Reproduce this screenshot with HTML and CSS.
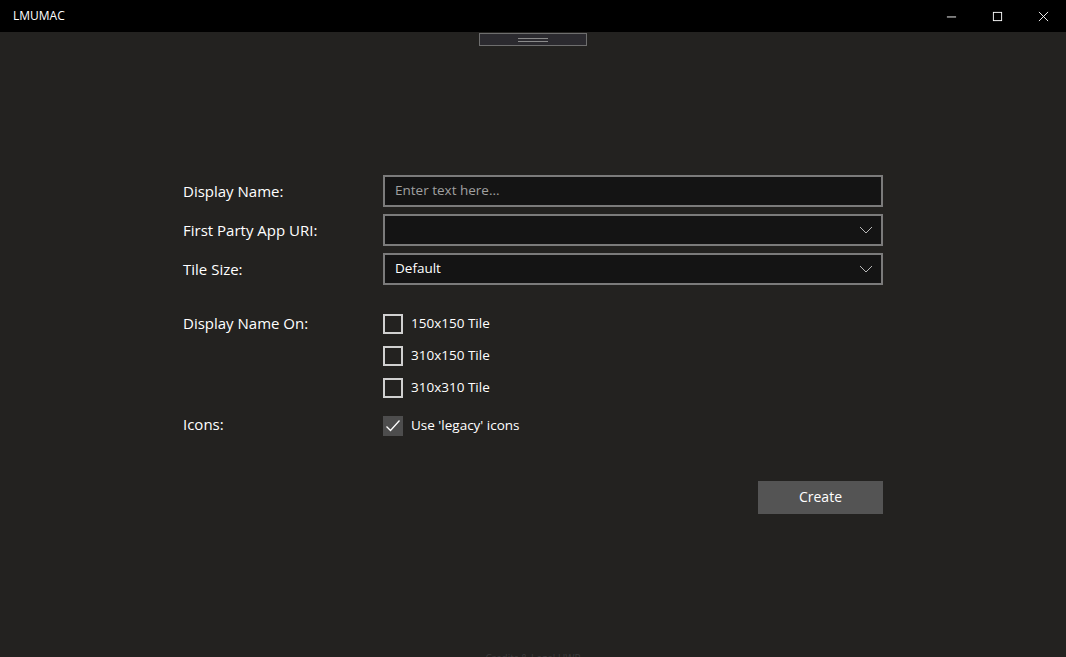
FILE: index.html
```html
<!DOCTYPE html>
<html>
<head>
<meta charset="utf-8">
<link rel="stylesheet" href="styles.css">
</head>
<body>
<div class="window">
  <header class="titlebar">
    <span class="title">LMUMAC</span>
    <div class="caption-buttons">
      <span class="cap-btn"><svg width="12" height="12" viewBox="0 0 12 12"><path d="M1 6.5H11" stroke="#fff" stroke-width="1"/></svg></span>
      <span class="cap-btn"><svg width="12" height="12" viewBox="0 0 12 12"><rect x="1.5" y="1.5" width="9" height="9" fill="none" stroke="#fff" stroke-width="1"/></svg></span>
      <span class="cap-btn"><svg width="12" height="12" viewBox="0 0 12 12"><path d="M1 1L11 11M11 1L1 11" stroke="#fff" stroke-width="1"/></svg></span>
    </div>
  </header>
  <main class="content">
    <div class="handle"><span class="grip"></span></div>
    <form class="form">
      <label class="label">Display Name:</label>
      <div class="field text-field"><span class="placeholder">Enter text here...</span></div>

      <label class="label row2">First Party App URI:</label>
      <div class="field combo row2"><span class="value"></span><svg class="chev" width="14" height="8" viewBox="0 0 14 8"><path d="M1 1L7 7L13 1" fill="none" stroke="#b8b8b8" stroke-width="1"/></svg></div>

      <label class="label row3">Tile Size:</label>
      <div class="field combo row3"><span class="value">Default</span><svg class="chev" width="14" height="8" viewBox="0 0 14 8"><path d="M1 1L7 7L13 1" fill="none" stroke="#b8b8b8" stroke-width="1"/></svg></div>

      <label class="label label-checks">Display Name On:</label>
      <div class="checks">
        <div class="check"><span class="box"></span><span class="check-text">150x150 Tile</span></div>
        <div class="check"><span class="box"></span><span class="check-text">310x150 Tile</span></div>
        <div class="check"><span class="box"></span><span class="check-text">310x310 Tile</span></div>
      </div>

      <label class="label label-icons">Icons:</label>
      <div class="checks icons-check">
        <div class="check"><span class="box checked"><svg width="20" height="20" viewBox="0 0 20 20"><path d="M3.5 10.5L7.5 14.5L16.5 4.5" fill="none" stroke="#fff" stroke-width="1.3"/></svg></span><span class="check-text">Use 'legacy' icons</span></div>
      </div>

      <div class="actions"><button type="button" class="btn">Create</button></div>
    </form>
    <div class="footer-note">Credits &amp; Legal UWP</div>
  </main>
</div>
</body>
</html>
```

FILE: styles.css
```css
* { box-sizing: border-box; }
html, body {
  margin: 0;
  padding: 0;
  background: #232220;
}
body {
  font-family: "Segoe UI", "Open Sans", "Noto Sans", sans-serif;
  color: #fff;
}
.window {
  width: 1066px;
  height: 657px;
  display: flex;
  flex-direction: column;
  overflow: hidden;
}
.titlebar {
  height: 32px;
  background: #000;
  display: flex;
  align-items: center;
  justify-content: space-between;
  flex-shrink: 0;
}
.title {
  font-size: 12px;
  padding-left: 13px;
  padding-bottom: 1px;
}
.caption-buttons {
  display: flex;
  height: 32px;
}
.cap-btn {
  width: 46px;
  height: 32px;
  display: flex;
  align-items: center;
  justify-content: center;
}
.cap-btn svg { width: 11px; height: 11px; }
.content {
  flex: 1;
  display: flex;
  flex-direction: column;
  align-items: center;
  background: #232220;
}
.handle {
  width: 108px;
  height: 13px;
  margin-top: 1px;
  border: 1px solid #6e6e6e;
  background: #2b2a2f;
  display: flex;
  align-items: center;
  justify-content: center;
}
.grip {
  width: 30px;
  height: 4px;
  border-top: 1px solid #8a8a8a;
  border-bottom: 1px solid #8a8a8a;
}
.form {
  margin-top: 129px;
  width: 700px;
  display: grid;
  grid-template-columns: 200px 500px;
  row-gap: 0;
  align-self: flex-start;
  margin-left: 183px;
}
.label {
  font-size: 15px;
  display: flex;
  align-items: center;
  height: 32px;
  color: #fff;
  padding-bottom: 1px;
}
.row2 { margin-top: 7px; }
.row3 { margin-top: 7px; }
.field {
  height: 32px;
  border: 2px solid #7b7b7b;
  background: #141414;
  display: flex;
  align-items: center;
  padding: 0 10px;
  font-size: 13.5px;
}
.placeholder { color: #a0a0a0; margin-bottom: 3px; }
.combo { justify-content: space-between; }
.combo .value { margin-bottom: 2px; }
.chev { margin-right: -2px; }
.label-checks {
  margin-top: 29px;
  height: 20px;
  padding-bottom: 3px;
}
.checks {
  margin-top: 29px;
  display: flex;
  flex-direction: column;
  gap: 12px;
}
.check {
  display: flex;
  align-items: center;
  height: 20px;
  gap: 8px;
  font-size: 13.5px;
}
.box {
  width: 20px;
  height: 20px;
  border: 2px solid #d0d0d0;
  display: block;
  flex-shrink: 0;
}
.box.checked {
  border: none;
  background: #4d4d4d;
}
.box svg { display: block; }
.check-text { margin-bottom: 3px; }
.label-icons {
  margin-top: 18px;
  height: 20px;
  padding-bottom: 4px;
}
.icons-check { margin-top: 18px; }
.actions {
  grid-column: 2;
  display: flex;
  justify-content: flex-end;
  margin-top: 45px;
}
.btn {
  width: 125px;
  height: 33px;
  background: #545454;
  border: none;
  color: #fff;
  font-family: "Segoe UI", "Open Sans", "Noto Sans", sans-serif;
  font-size: 14px;
  padding: 0 0 2px;
}
.footer-note {
  margin-top: auto;
  margin-bottom: -7px;
  font-size: 10px;
  line-height: 12px;
  color: #3a3a3a;
}
```
